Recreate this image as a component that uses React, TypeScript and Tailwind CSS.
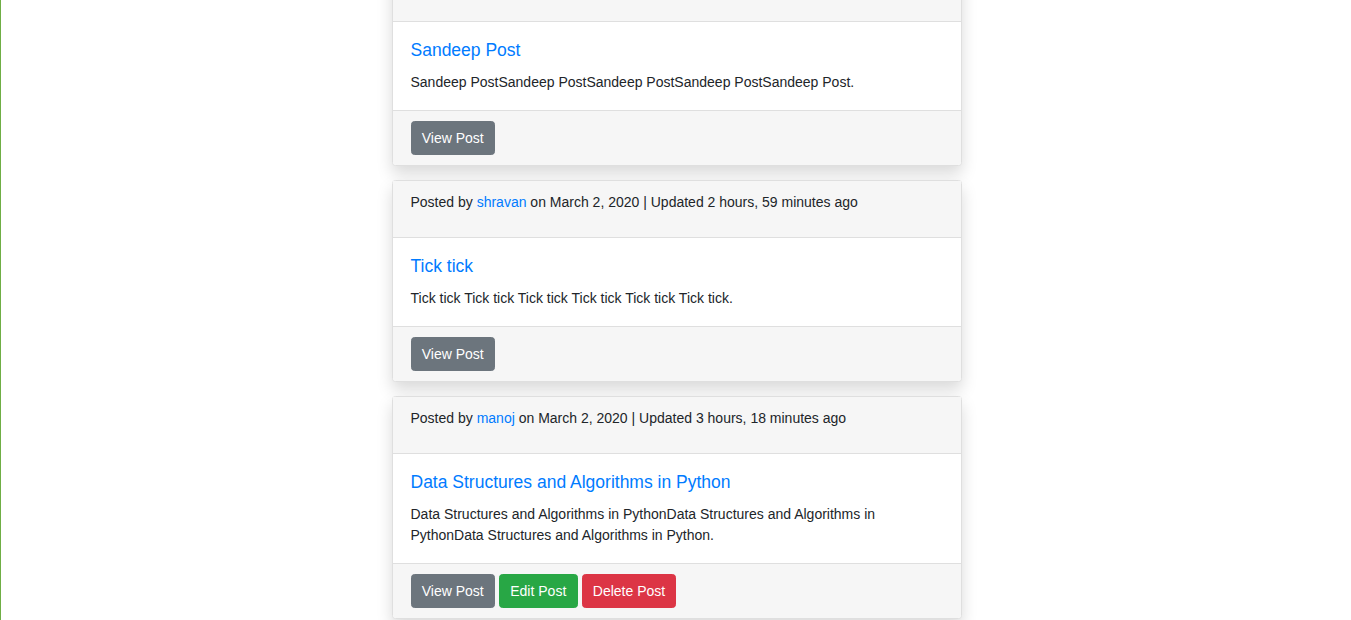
import React from 'react'

interface Post {
  id: number
  author?: string
  date?: string
  updated?: string
  title: string
  body: string
  owner?: boolean
}

// first card is scrolled half out of view, its header line is above the fold
const posts: Post[] = [
  {
    id: 1,
    title: 'Sandeep Post',
    body: 'Sandeep PostSandeep PostSandeep PostSandeep PostSandeep Post.',
  },
  {
    id: 2,
    author: 'shravan',
    date: 'March 2, 2020',
    updated: '2 hours, 59 minutes ago',
    title: 'Tick tick',
    body: 'Tick tick Tick tick Tick tick Tick tick Tick tick Tick tick.',
  },
  {
    id: 3,
    author: 'manoj',
    date: 'March 2, 2020',
    updated: '3 hours, 18 minutes ago',
    title: 'Data Structures and Algorithms in Python',
    body: 'Data Structures and Algorithms in PythonData Structures and Algorithms in PythonData Structures and Algorithms in Python.',
    owner: true,
  },
]

function Btn({ color, children }: { color: string; children: React.ReactNode }) {
  return (
    <a
      href="#"
      className={`inline-block rounded-[3.5px] border px-[10.25px] pt-[6px] pb-[4.5px] text-[14px] leading-[21px] text-white ${color}`}
    >
      {children}
    </a>
  )
}

function PostCard({ post }: { post: Post }) {
  return (
    <div className="mb-[14px] rounded-[3.5px] border border-[#dfdfdf] bg-white shadow-[0_0.5rem_1rem_rgba(0,0,0,0.15)]">
      {/* Header */}
      <div className="min-h-[57px] border-b border-[#dfdfdf] bg-[#f6f6f6] px-[17.5px] py-[10.5px]">
        {post.author && (
          <p className="mb-[14px]">
            Posted by{' '}
            <a href="#" className="text-[#007bff]">
              {post.author}
            </a>{' '}
            on {post.date} | Updated {post.updated}
          </p>
        )}
      </div>

      {/* Body */}
      <div className="px-[17.5px] pt-[17.5px] pb-[16.5px]">
        <h5 className="mb-[11.5px] text-[17.5px] leading-[21px] text-[#007bff]">{post.title}</h5>
        <p>{post.body}</p>
      </div>

      {/* Footer */}
      <div className="flex gap-[4px] rounded-b-[3.5px] border-t border-[#dfdfdf] bg-[#f6f6f6] px-[17.5px] py-[10.5px]">
        <Btn color="border-[#6c757d] bg-[#6c757d]">View Post</Btn>
        {post.owner && (
          <>
            <Btn color="border-[#28a745] bg-[#28a745]">Edit Post</Btn>
            <Btn color="border-[#dc3545] bg-[#dc3545]">Delete Post</Btn>
          </>
        )}
      </div>
    </div>
  )
}

export default function App() {
  return (
    <div
      className="h-[620px] overflow-hidden border-l border-[#6fae45] bg-white text-[14px] leading-[21px] text-[#212529]"
      style={{ fontFamily: '"Liberation Sans", Arial, sans-serif' }}
    >
      <div className="-mt-[36px] flex justify-center pl-[2px]">
        <div className="w-[570px]">
          {posts.map((p) => (
            <PostCard key={p.id} post={p} />
          ))}
        </div>
      </div>
    </div>
  )
}
